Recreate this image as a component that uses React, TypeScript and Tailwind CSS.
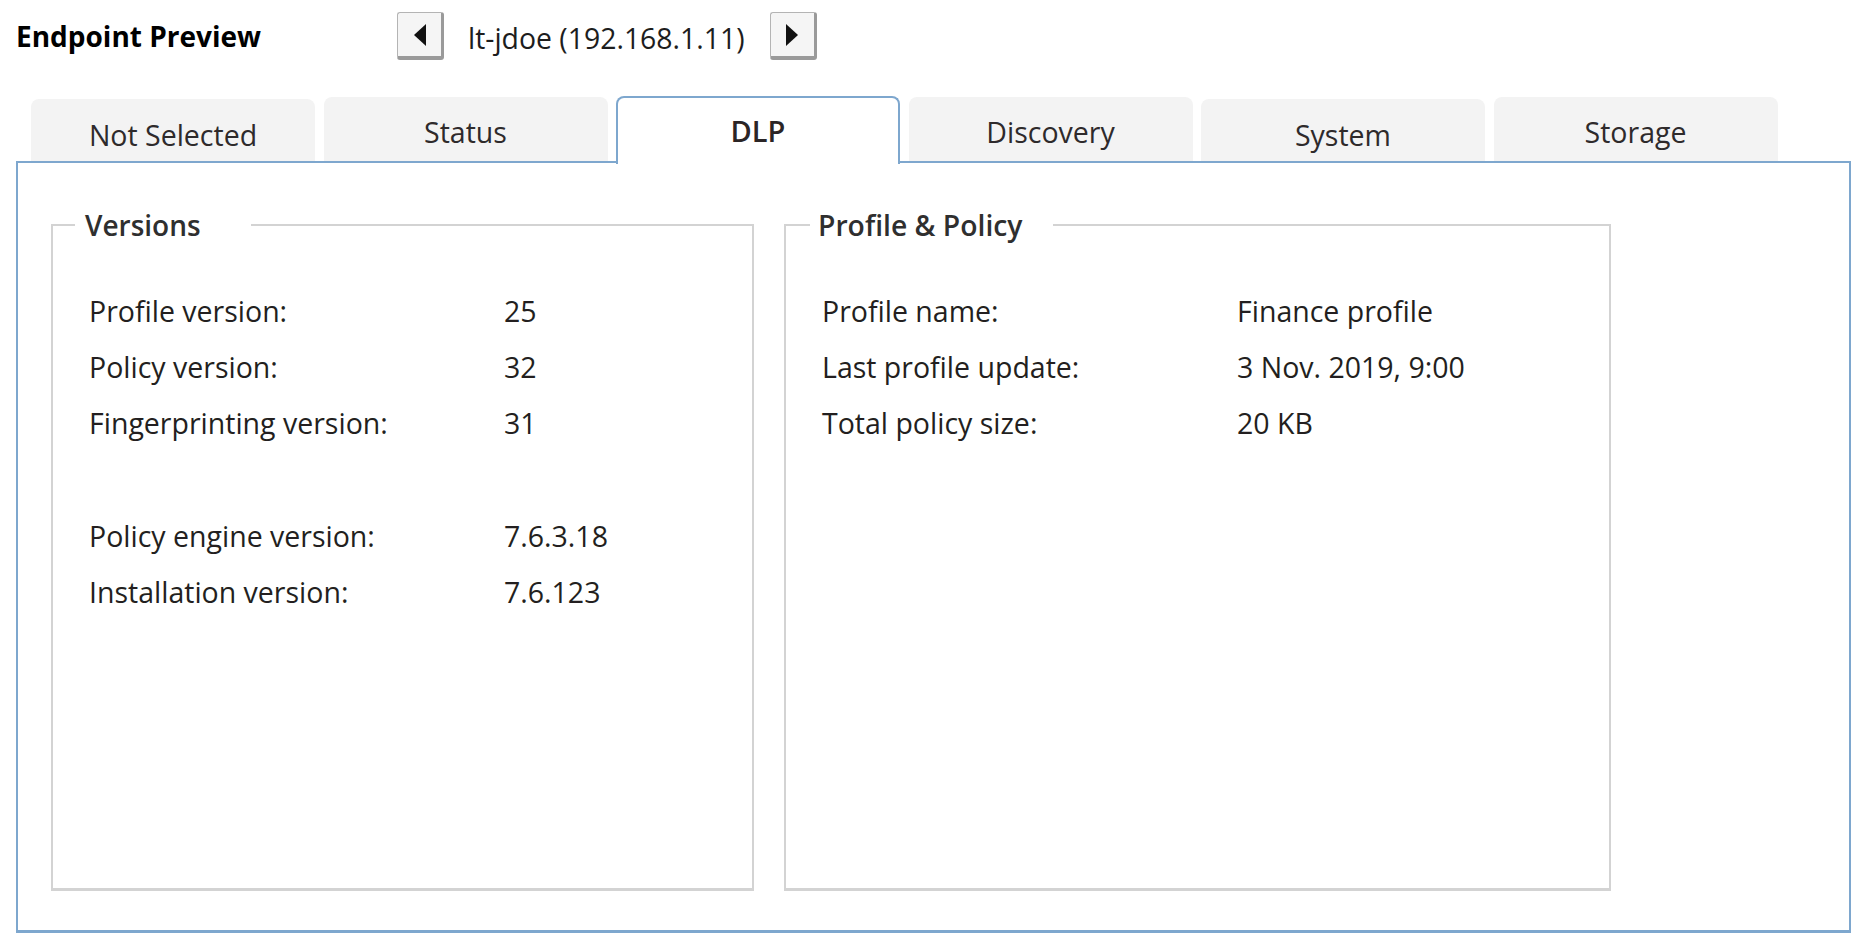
import React from 'react';

const font = { fontFamily: '"Open Sans", "Noto Sans", sans-serif' };

const tabs = ['Not Selected', 'Status', 'DLP', 'Discovery', 'System', 'Storage'];

const versions: ([string, string] | null)[] = [
  ['Profile version:', '25'],
  ['Policy version:', '32'],
  ['Fingerprinting version:', '31'],
  null,
  ['Policy engine version:', '7.6.3.18'],
  ['Installation version:', '7.6.123'],
];

const profile: [string, string][] = [
  ['Profile name:', 'Finance profile'],
  ['Last profile update:', '3 Nov. 2019, 9:00'],
  ['Total policy size:', '20 KB'],
];

function ArrowButton({ dir }: { dir: 'left' | 'right' }) {
  return (
    <button
      type="button"
      className="w-[47px] h-[48px] flex items-center justify-center rounded-[3px] bg-[#f5f5f5] border border-[#b4b4b4] border-r-[3px] border-b-[4px] border-r-[#9a9a9a] border-b-[#9a9a9a]"
    >
      <svg width="14" height="22" viewBox="0 0 14 22">
        {dir === 'left' ? (
          <polygon points="13,0 13,22 1,11" fill="#111" />
        ) : (
          <polygon points="1,0 1,22 13,11" fill="#111" />
        )}
      </svg>
    </button>
  );
}

function Row({ label, value }: { label: string; value: string }) {
  return (
    <>
      <div className="h-[56px] flex items-center">{label}</div>
      <div className="h-[56px] flex items-center">{value}</div>
    </>
  );
}

export default function App() {
  return (
    <div className="w-[1864px] h-[944px] bg-white text-[#231f20]" style={font}>
      <div className="flex items-center h-[72px] pl-4">
        <div className="w-[381px] text-[28px] font-bold text-black">Endpoint Preview</div>
        <ArrowButton dir="left" />
        <div className="ml-[24px] mr-[25px] mt-[5px] text-[28.4px] text-[#1d1d1d]">lt-jdoe (192.168.1.11)</div>
        <ArrowButton dir="right" />
      </div>

      <div className="flex items-end gap-[8.5px] pl-[31px] h-[89px]">
        {tabs.map((t) =>
          t === 'DLP' ? (
            <div
              key={t}
              className="relative z-10 -mb-[3px] w-[284px] h-[68px] bg-white border-2 border-b-0 border-[#7ea7ce] rounded-t-[8px] flex items-center justify-center text-[29px] font-semibold text-[#2b2526]"
            >
              {t}
            </div>
          ) : (
            <div
              key={t}
              className={
                'w-[284px] bg-[#f3f3f3] rounded-t-[8px] flex items-center justify-center text-[28.5px] text-[#2e2a2b] ' +
                (t === 'System' || t === 'Not Selected' ? 'h-[62px] pt-[10px]' : 'h-[64px] pt-[6px]')
              }
            >
              {t}
            </div>
          )
        )}
      </div>

      <div className="ml-4 w-[1835px] h-[772px] border-2 border-b-[3px] border-[#7ea7ce] pl-[33px] pt-[44px]">
        <div className="flex gap-[30px] items-start">
          <fieldset className="w-[703px] h-[684px] border-2 border-b-[3px] border-[#d3d3d3]">
            <legend className="ml-[22px] pl-[10px] pr-[50px] text-[28px] font-semibold text-[#2f2f2f] leading-[36px]">
              Versions
            </legend>
            <div className="grid grid-cols-[415px_1fr] pl-[36px] mt-[40px] text-[28.5px]">
              {versions.map((r, i) =>
                r ? (
                  <Row key={i} label={r[0]} value={r[1]} />
                ) : (
                  <div key={i} className="col-span-2 h-[57px]" />
                )
              )}
            </div>
          </fieldset>

          <fieldset className="w-[827px] h-[684px] border-2 border-b-[3px] border-[#d3d3d3]">
            <legend className="ml-[24px] pl-[8px] pr-[31px] text-[28.3px] font-semibold text-[#2f2f2f] leading-[36px]">
              Profile &amp; Policy
            </legend>
            <div className="grid grid-cols-[415px_1fr] pl-[36px] mt-[40px] text-[28.5px]">
              {profile.map((r, i) => (
                <Row key={i} label={r[0]} value={r[1]} />
              ))}
            </div>
          </fieldset>
        </div>
      </div>
    </div>
  );
}
